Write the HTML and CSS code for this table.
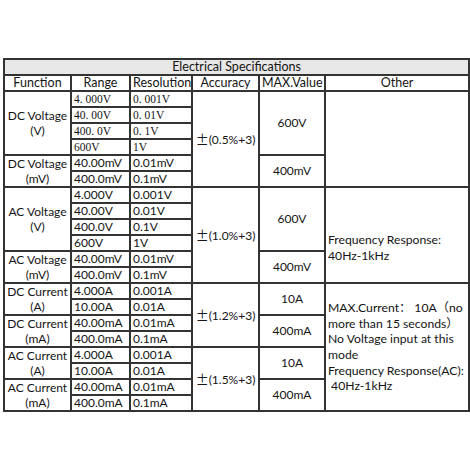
FILE: index.html
```html
<!DOCTYPE html>
<html>
<head>
<meta charset="utf-8">
<link rel="stylesheet" href="styles.css">
</head>
<body>
<div class="page">
<table class="spec">
<colgroup>
<col class="c-fn"><col class="c-range"><col class="c-res"><col class="c-acc"><col class="c-max"><col class="c-other">
</colgroup>
<tr><td class="title" colspan="6">Electrical Specifications</td></tr>
<tr class="head"><td>Function</td><td>Range</td><td>Resolution</td><td>Accuracy</td><td>MAX.Value</td><td>Other</td></tr>

<tr><td class="fn" rowspan="4">DC Voltage<br>(V)</td><td class="serif">4. 000V</td><td class="serif">0. 001V</td><td class="acc" rowspan="6"><span class="pm">±</span>(0.5%+3)</td><td class="max" rowspan="4">600V</td><td class="other" rowspan="6"></td></tr>
<tr><td class="serif">40. 00V</td><td class="serif">0. 01V</td></tr>
<tr><td class="serif">400. 0V</td><td class="serif">0. 1V</td></tr>
<tr><td class="serif">600V</td><td class="serif">1V</td></tr>
<tr><td class="fn" rowspan="2">DC Voltage<br>(mV)</td><td>40.00mV</td><td>0.01mV</td><td class="max" rowspan="2">400mV</td></tr>
<tr><td>400.0mV</td><td>0.1mV</td></tr>

<tr><td class="fn" rowspan="4">AC Voltage<br>(V)</td><td>4.000V</td><td>0.001V</td><td class="acc" rowspan="6"><span class="pm">±</span>(1.0%+3)</td><td class="max" rowspan="4">600V</td><td class="other low" rowspan="6">Frequency Response:<br>40Hz-1kHz</td></tr>
<tr><td>40.00V</td><td>0.01V</td></tr>
<tr><td>400.0V</td><td>0.1V</td></tr>
<tr><td>600V</td><td>1V</td></tr>
<tr><td class="fn" rowspan="2">AC Voltage<br>(mV)</td><td>40.00mV</td><td>0.01mV</td><td class="max" rowspan="2">400mV</td></tr>
<tr><td>400.0mV</td><td>0.1mV</td></tr>

<tr><td class="fn" rowspan="2">DC Current<br>(A)</td><td>4.000A</td><td>0.001A</td><td class="acc" rowspan="4"><span class="pm">±</span>(1.2%+3)</td><td class="max" rowspan="2">10A</td><td class="other" rowspan="8">MAX.Current<span class="cjk">：</span> 10A<span class="cjk">（</span>no more than 15 seconds<span class="cjk">）</span><br>No Voltage input at this mode<br>Frequency Response(AC):<br>&nbsp;40Hz-1kHz</td></tr>
<tr><td>10.00A</td><td>0.01A</td></tr>
<tr><td class="fn" rowspan="2">DC Current<br>(mA)</td><td>40.00mA</td><td>0.01mA</td><td class="max" rowspan="2">400mA</td></tr>
<tr><td>400.0mA</td><td>0.1mA</td></tr>
<tr><td class="fn" rowspan="2">AC Current<br>(A)</td><td>4.000A</td><td>0.001A</td><td class="acc" rowspan="4"><span class="pm">±</span>(1.5%+3)</td><td class="max" rowspan="2">10A</td></tr>
<tr><td>10.00A</td><td>0.01A</td></tr>
<tr><td class="fn" rowspan="2">AC Current<br>(mA)</td><td>40.00mA</td><td>0.01mA</td><td class="max" rowspan="2">400mA</td></tr>
<tr><td>400.0mA</td><td>0.1mA</td></tr>
</table>
</div>
</body>
</html>
```
FILE: styles.css
```css
html, body {
  margin: 0;
  padding: 0;
  background: #ffffff;
}
.page {
  padding: 58px 0 0 3px;
}
.spec {
  border-collapse: collapse;
  table-layout: fixed;
  width: 465px;
  border: 2px solid #222;
  font-family: Lato, "Noto Sans", sans-serif;
  font-size: 12px;
  color: #141414;
}
.c-fn { width: 67px; }
.c-range { width: 59px; }
.c-res { width: 62px; }
.c-acc { width: 67px; }
.c-max { width: 66px; }
.c-other { width: 144px; }
.spec td {
  border: 2px solid #333;
  height: 14px;
  padding: 0 2px;
  line-height: 14px;
  white-space: nowrap;
  overflow: hidden;
  text-align: left;
}
.spec td.title {
  background: #e7e7e7;
  text-align: center;
  font-size: 12.5px;
}
.head td {
  text-align: center;
  font-size: 12.5px;
}
.spec td.fn {
  text-align: center;
  line-height: 15px;
}
.spec td.serif {
  font-family: "Liberation Serif", "DejaVu Serif", serif;
  font-size: 11.5px;
}
.spec td.acc {
  text-align: center;
  padding: 0;
}
.spec td.max {
  text-align: center;
}
.spec td.other {
  line-height: 15.6px;
  white-space: normal;
  font-size: 12.2px;
}
.spec td.other.low {
  padding-top: 26px;
}
.pm {
  font-family: "Noto Sans CJK SC", sans-serif;
  font-size: 13px;
  line-height: 14px;
}
.cjk {
  font-family: "Noto Sans CJK SC", sans-serif;
  line-height: 14px;
}
```
